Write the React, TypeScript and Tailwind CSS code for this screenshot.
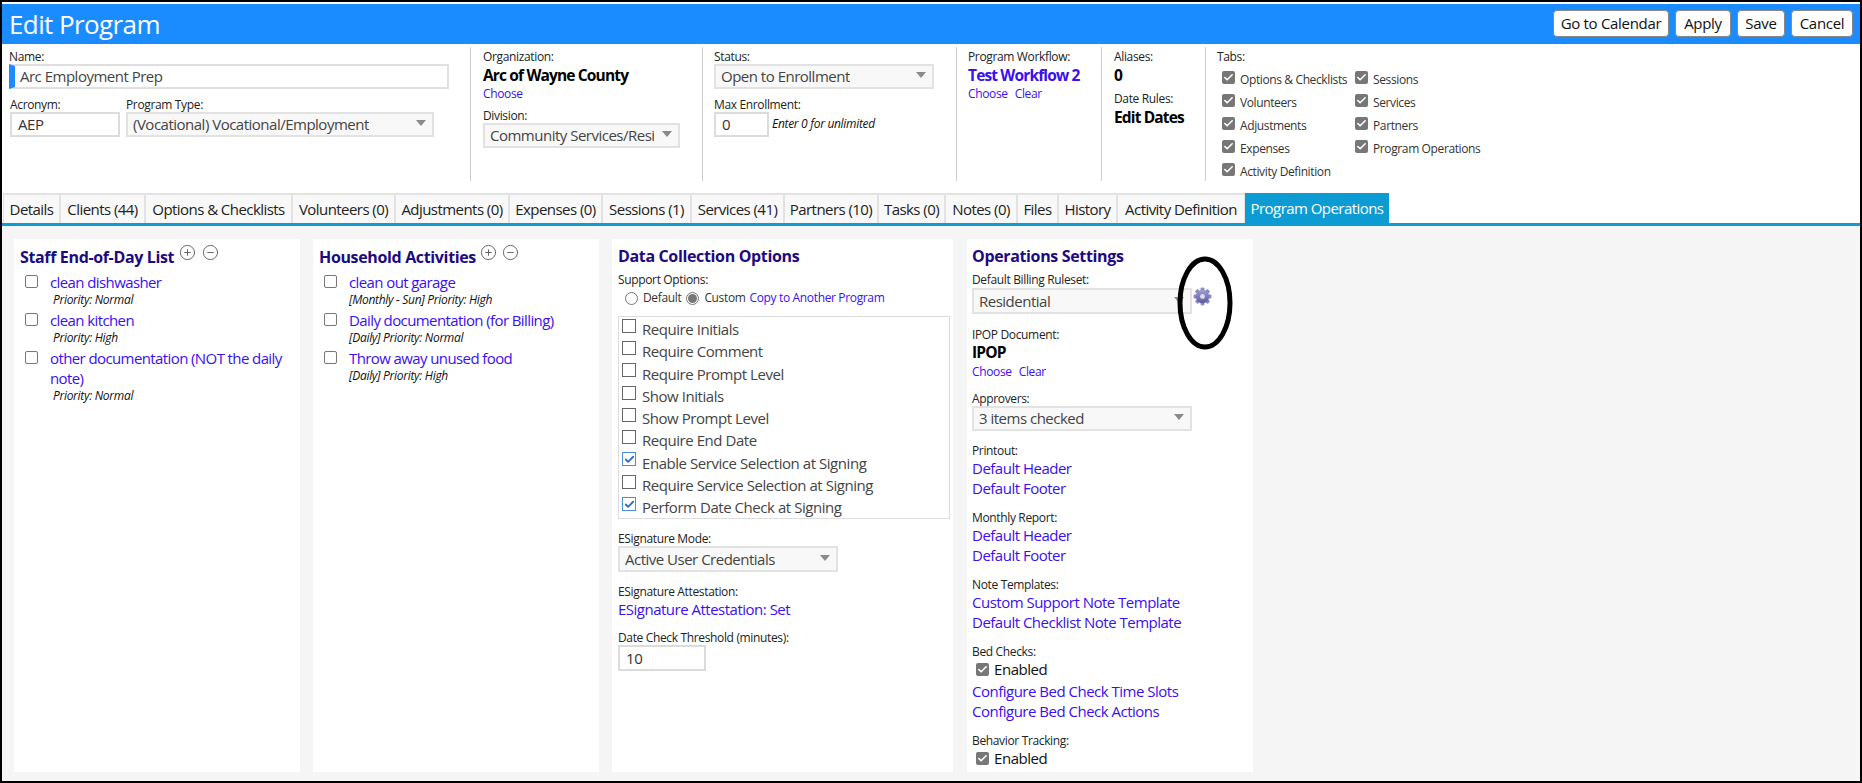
import type { ReactNode } from 'react';
import { Check, CircleMinus, CirclePlus } from 'lucide-react';

const FONT = 'font-["Open_Sans","Noto_Sans",sans-serif]';

const Label = ({ children, className = '' }: { children: ReactNode; className?: string }) => (
  <div className={`h-[15px] text-[12px] leading-[15px] tracking-[-0.35px] text-[#222] whitespace-nowrap ${className}`}>{children}</div>
);

const A = ({ children, className = '' }: { children: ReactNode; className?: string }) => (
  <span className={`text-[#3a0ff0] whitespace-nowrap ${className}`}>{children}</span>
);

const BigLink = ({ children }: { children: ReactNode }) => (
  <div className="h-[20px] text-[15px] leading-[20px] tracking-[-0.5px]">
    <A>{children}</A>
  </div>
);

const Bold = ({ children }: { children: ReactNode }) => (
  <div className="h-[20px] text-[15.5px] leading-[20px] font-bold tracking-[-0.85px] text-black whitespace-nowrap">{children}</div>
);

const Select = ({ value, className = '' }: { value: string; className?: string }) => (
  <div className={`flex items-center justify-between border-2 border-[#e2e2e2] bg-[#f8f8f8] pl-[5px] pr-[6px] text-[15px] tracking-[-0.5px] text-[#444] ${className}`}>
    <span className="overflow-hidden whitespace-nowrap">{value}</span>
    <svg width="10" height="6" viewBox="0 0 10 6" className="ml-[8px] mb-[3px] shrink-0">
      <path d="M0 0h10L5 6z" fill="#8a8a8a" />
    </svg>
  </div>
);

const TextBox = ({ value, className = '' }: { value: string; className?: string }) => (
  <div className={`flex items-center border-2 border-[#dcdcdc] bg-white px-[6px] text-[15px] tracking-[-0.45px] text-[#333] ${className}`}>{value}</div>
);

const GrayCheck = ({ className = '' }: { className?: string }) => (
  <span className={`flex h-[13px] w-[13px] shrink-0 items-center justify-center rounded-[2px] bg-[#777] ${className}`}>
    <Check size={11} strokeWidth={3.5} color="#fff" />
  </span>
);

const BoxCheck = ({ checked }: { checked?: boolean }) => (
  <span className={`mb-[7px] flex h-[14px] w-[14px] shrink-0 items-center justify-center border-[1.5px] ${checked ? 'border-[#4a8fd8] bg-white' : 'border-[#666] bg-white'}`}>
    {checked && <Check size={11} strokeWidth={4} color="#2f6fc4" />}
  </span>
);

const TabOption = ({ label }: { label: string }) => (
  <div className="flex h-[23px] items-center gap-[5px]">
    <GrayCheck className="mb-[5px]" />
    <span className="text-[12px] tracking-[-0.38px] text-[#333] whitespace-nowrap">{label}</span>
  </div>
);

const tabs = [
  { label: 'Details', width: 'w-[57px]' },
  { label: 'Clients (44)', width: 'w-[85px]' },
  { label: 'Options & Checklists', width: 'w-[147px]' },
  { label: 'Volunteers (0)', width: 'w-[103px]' },
  { label: 'Adjustments (0)', width: 'w-[114px]' },
  { label: 'Expenses (0)', width: 'w-[93px]' },
  { label: 'Sessions (1)', width: 'w-[89px]' },
  { label: 'Services (41)', width: 'w-[93px]' },
  { label: 'Partners (10)', width: 'w-[94px]' },
  { label: 'Tasks (0)', width: 'w-[67px]' },
  { label: 'Notes (0)', width: 'w-[72px]' },
  { label: 'Files', width: 'w-[41px]' },
  { label: 'History', width: 'w-[59px]' },
  { label: 'Activity Definition', width: 'w-[128px]' },
];

const Title = ({ children }: { children: ReactNode }) => (
  <span className="block text-[16px] font-bold leading-[20px] tracking-[-0.35px] text-[#1c0a80] whitespace-nowrap">{children}</span>
);

const Activity = ({ name, sub, indent }: { name: string; sub: string; indent: string }) => (
  <div className="flex gap-[12px]">
    <span className="mt-[3px] h-[13px] w-[13px] shrink-0 rounded-[2px] border-[1.5px] border-[#777] bg-white" />
    <div className="min-w-0">
      <div className="text-[15px] leading-[20px] tracking-[-0.6px]">
        <span className="text-[#3a0ff0]">{name}</span>
      </div>
      <div className={`h-[18px] text-[12px] italic leading-[16px] tracking-[-0.3px] text-[#111] whitespace-nowrap ${indent}`}>{sub}</div>
    </div>
  </div>
);

const ListPanel = ({ title, iconGap, items, indent }: { title: string; iconGap: string; items: { name: string; sub: string }[]; indent: string }) => (
  <section className="h-[533px] w-[286px] shrink-0 bg-white pl-[6px] pr-[10px]">
    <div className="flex h-[33px] items-start pt-[8px]">
      <Title>{title}</Title>
      <CirclePlus size={17} strokeWidth={1.25} color="#555" className={`mt-[-3px] ${iconGap}`} />
      <CircleMinus size={17} strokeWidth={1.25} color="#555" className="ml-[5.5px] mt-[-3px]" />
    </div>
    <div className="pl-[5px]">
      {items.map((item) => (
        <Activity key={item.name} name={item.name} sub={item.sub} indent={indent} />
      ))}
    </div>
  </section>
);

const dataOptions = [
  { label: 'Require Initials' },
  { label: 'Require Comment' },
  { label: 'Require Prompt Level' },
  { label: 'Show Initials' },
  { label: 'Show Prompt Level' },
  { label: 'Require End Date' },
  { label: 'Enable Service Selection at Signing', checked: true },
  { label: 'Require Service Selection at Signing' },
  { label: 'Perform Date Check at Signing', checked: true },
];

const Radio = ({ on }: { on?: boolean }) => (
  <span className="flex h-[13px] w-[13px] items-center justify-center rounded-full border border-[#777] bg-white">
    {on && <span className="h-[9px] w-[9px] rounded-full bg-[#777]" />}
  </span>
);

const Gear = () => (
  <svg width="19" height="19" viewBox="0 0 20 20" className="mt-[-1px] ml-px shrink-0">
    <defs>
      <linearGradient id="gearFill" x1="0" y1="0" x2="0" y2="1">
        <stop offset="0" stopColor="#a09ed4" />
        <stop offset="1" stopColor="#5c5a9e" />
      </linearGradient>
    </defs>
    {[0, 45, 90, 135, 180, 225, 270, 315].map((angle) => (
      <rect key={angle} x="8" y="0.5" width="4" height="5" rx="1" fill="url(#gearFill)" transform={`rotate(${angle} 10 10)`} />
    ))}
    <circle cx="10" cy="10" r="7" fill="url(#gearFill)" />
    <circle cx="10" cy="10" r="2.6" fill="#dcdcf0" />
  </svg>
);

const EnabledRow = () => (
  <div className="flex h-[20px] items-center gap-[5px] pl-[4px] text-[15px] tracking-[-0.45px] text-[#111]">
    <GrayCheck />
    Enabled
  </div>
);

export default function App() {
  return (
    <div className={`${FONT} flex h-[783px] w-[1862px] flex-col overflow-hidden border-b-2 border-l-2 border-r-2 border-t-2 border-black bg-white`}>
      <header className="mt-[2px] flex h-[40px] shrink-0 items-start justify-between bg-[#1a8cff] pl-[7px] pr-[7px]">
        <h1 className="text-[26px] leading-[40px] tracking-[-0.6px] text-white">Edit Program</h1>
        <div className="flex gap-[6px] pt-[6px] text-[15px] tracking-[-0.3px] text-[#111]">
          <button className="h-[27px] w-[116px] rounded-[4px] border border-[#888] bg-white">Go to Calendar</button>
          <button className="h-[27px] w-[56px] rounded-[4px] border border-[#888] bg-white">Apply</button>
          <button className="h-[27px] w-[48px] rounded-[4px] border border-[#888] bg-white">Save</button>
          <button className="h-[27px] w-[62px] rounded-[4px] border border-[#888] bg-white">Cancel</button>
        </div>
      </header>

      <div className="flex h-[149px] shrink-0 items-start pt-[3px]">
        <div className="h-[134px] w-[469px] border-r border-[#ccc] pl-[7px] pt-[2px]">
          <Label>Name:</Label>
          <div className="flex h-[25px] w-[440px] items-center border-2 border-l-[6px] border-[#e0e0e0] border-l-[#1a8cff] pl-[5px] text-[15px] tracking-[-0.5px] text-[#444]">
            Arc Employment Prep
          </div>
          <div className="mt-[8px] flex gap-[6px]">
            <div className="pl-px">
              <Label>Acronym:</Label>
              <TextBox value="AEP" className="h-[25px] w-[110px]" />
            </div>
            <div>
              <Label>Program Type:</Label>
              <Select value="(Vocational) Vocational/Employment" className="h-[25px] w-[308px]" />
            </div>
          </div>
        </div>

        <div className="h-[134px] w-[232px] border-r border-[#ccc] pl-[12px] pt-[2px]">
          <Label>Organization:</Label>
          <div className="mt-px">
            <Bold>Arc of Wayne County</Bold>
          </div>
          <div className="mt-[1px] h-[16px] text-[12px] leading-[16px] tracking-[-0.35px]">
            <A>Choose</A>
          </div>
          <Label className="mt-[6px]">Division:</Label>
          <Select value="Community Services/Residential" className="h-[25px] w-[197px]" />
        </div>

        <div className="h-[134px] w-[254px] border-r border-[#ccc] pl-[11px] pt-[2px]">
          <Label>Status:</Label>
          <Select value="Open to Enrollment" className="h-[25px] w-[220px]" />
          <Label className="mt-[8px]">Max Enrollment:</Label>
          <div className="flex items-start gap-[3px]">
            <TextBox value="0" className="h-[25px] w-[55px]" />
            <span className="mt-[4px] text-[12px] italic leading-[16px] tracking-[-0.3px] text-[#111] whitespace-nowrap">Enter 0 for unlimited</span>
          </div>
        </div>

        <div className="h-[134px] w-[145px] border-r border-[#ccc] pl-[11px] pt-[2px]">
          <Label>Program Workflow:</Label>
          <div className="mt-px h-[20px] text-[15.5px] font-bold leading-[20px] tracking-[-0.85px]">
            <A>Test Workflow 2</A>
          </div>
          <div className="mt-[1px] flex h-[16px] gap-[7px] text-[12px] leading-[16px] tracking-[-0.35px]">
            <A>Choose</A>
            <A>Clear</A>
          </div>
        </div>

        <div className="h-[134px] w-[104px] border-r border-[#ccc] pl-[12px] pt-[2px]">
          <Label>Aliases:</Label>
          <div className="mt-px">
            <Bold>0</Bold>
          </div>
          <Label className="mt-[6px]">Date Rules:</Label>
          <div className="mt-px">
            <Bold>Edit Dates</Bold>
          </div>
        </div>

        <div className="pl-[11px] pt-[2px]">
          <Label>Tabs:</Label>
          <div className="flex pl-[5px] pt-[4px]">
            <div className="w-[133px]">
              <TabOption label="Options & Checklists" />
              <TabOption label="Volunteers" />
              <TabOption label="Adjustments" />
              <TabOption label="Expenses" />
              <TabOption label="Activity Definition" />
            </div>
            <div>
              <TabOption label="Sessions" />
              <TabOption label="Services" />
              <TabOption label="Partners" />
              <TabOption label="Program Operations" />
            </div>
          </div>
        </div>
      </div>

      <nav className="flex h-[33px] shrink-0 border-b-[3px] border-[#0d9bd3] pl-[1px] text-[15px] tracking-[-0.55px] text-[#222]">
        {tabs.map((tab) => (
          <div key={tab.label} className={`flex h-[30px] items-center justify-center border-x border-t-2 border-[#e2e2e2] bg-[#f8f8f8] whitespace-nowrap ${tab.width}`}>
            {tab.label}
          </div>
        ))}
        <div className="flex h-[30px] w-[144px] items-center justify-center bg-[#0d9bd3] text-white whitespace-nowrap">Program Operations</div>
      </nav>

      <main className="flex min-h-0 flex-1 gap-[13px] bg-[#f5f5f5] pl-[12px] pt-[13px]">
        <ListPanel
          title="Staff End-of-Day List"
          iconGap="ml-[5px]"
          indent="pl-[3px]"
          items={[
            { name: 'clean dishwasher', sub: 'Priority: Normal' },
            { name: 'clean kitchen', sub: 'Priority: High' },
            { name: 'other documentation (NOT the daily note)', sub: 'Priority: Normal' },
          ]}
        />
        <ListPanel
          title="Household Activities"
          iconGap="ml-[4px]"
          indent=""
          items={[
            { name: 'clean out garage', sub: '[Monthly - Sun] Priority: High' },
            { name: 'Daily documentation (for Billing)', sub: '[Daily] Priority: Normal' },
            { name: 'Throw away unused food', sub: '[Daily] Priority: High' },
          ]}
        />

        <section className="h-[533px] w-[341px] shrink-0 bg-white pl-[6px] pr-[3px] pt-[7px]">
          <Title>Data Collection Options</Title>
          <Label className="mt-[6px]">Support Options:</Label>
          <div className="mt-[1px] flex h-[20px] items-center pl-[7px] text-[12px] tracking-[-0.35px] text-[#333]">
            <Radio />
            <span className="ml-[5px]">Default</span>
            <span className="ml-[5px]">
              <Radio on />
            </span>
            <span className="ml-[5px]">Custom</span>
            <A className="ml-[4px]">Copy to Another Program</A>
          </div>
          <div className="mt-[8px] h-[203px] w-[332px] border border-[#ddd] pl-[3px] pt-[1px]">
            {dataOptions.map((option) => (
              <div key={option.label} className="flex h-[22.3px] items-center gap-[6px] text-[15px] tracking-[-0.45px] text-[#444] whitespace-nowrap">
                <BoxCheck checked={option.checked} />
                {option.label}
              </div>
            ))}
          </div>
          <Label className="mt-[12px]">ESignature Mode:</Label>
          <Select value="Active User Credentials" className="h-[26px] w-[220px]" />
          <Label className="mt-[12px]">ESignature Attestation:</Label>
          <BigLink>ESignature Attestation: Set</BigLink>
          <Label className="mt-[11px]">Date Check Threshold (minutes):</Label>
          <TextBox value="10" className="h-[26px] w-[88px]" />
        </section>

        <section className="relative ml-px h-[533px] w-[286px] shrink-0 bg-white pl-[5px] pt-[7px]">
          <Title>Operations Settings</Title>
          <Label className="mt-[6px]">Default Billing Ruleset:</Label>
          <div className="mt-px flex items-start">
            <Select value="Residential" className="h-[26px] w-[220px]" />
            <Gear />
          </div>
          <Label className="mt-[13px]">IPOP Document:</Label>
          <Bold>IPOP</Bold>
          <div className="mt-[2px] flex h-[16px] gap-[7px] text-[12px] leading-[16px] tracking-[-0.35px]">
            <A>Choose</A>
            <A>Clear</A>
          </div>
          <Label className="mt-[11px]">Approvers:</Label>
          <Select value="3 items checked" className="h-[25px] w-[220px]" />
          <Label className="mt-[12px]">Printout:</Label>
          <BigLink>Default Header</BigLink>
          <BigLink>Default Footer</BigLink>
          <Label className="mt-[12px]">Monthly Report:</Label>
          <BigLink>Default Header</BigLink>
          <BigLink>Default Footer</BigLink>
          <Label className="mt-[12px]">Note Templates:</Label>
          <BigLink>Custom Support Note Template</BigLink>
          <BigLink>Default Checklist Note Template</BigLink>
          <Label className="mt-[12px]">Bed Checks:</Label>
          <EnabledRow />
          <div className="mt-[2px]">
            <BigLink>Configure Bed Check Time Slots</BigLink>
            <BigLink>Configure Bed Check Actions</BigLink>
          </div>
          <Label className="mt-[12px]">Behavior Tracking:</Label>
          <EnabledRow />
          {/* hand-drawn annotation circled over the ruleset gear */}
          <svg width="58" height="96" viewBox="0 0 58 96" className="pointer-events-none absolute left-[209px] top-[16px]">
            <ellipse cx="29" cy="48" rx="25" ry="44" fill="none" stroke="#000" strokeWidth="5" />
          </svg>
        </section>
      </main>
    </div>
  );
}
